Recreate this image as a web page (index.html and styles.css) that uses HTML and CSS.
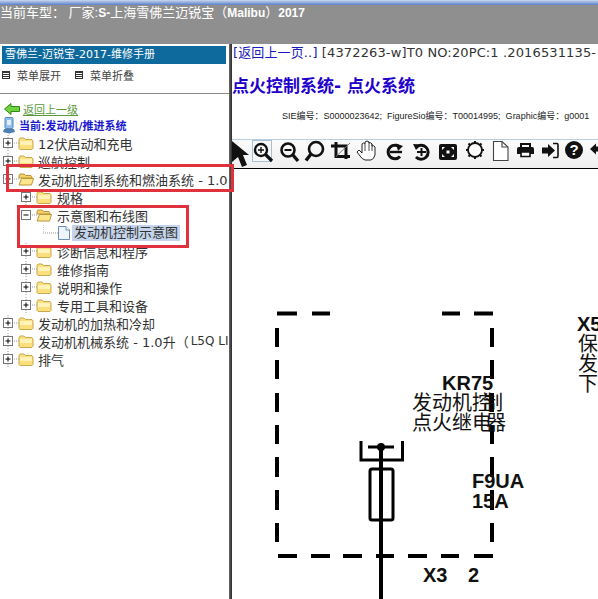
FILE: index.html
```html
<!DOCTYPE html>
<html lang="zh-CN">
<head>
<meta charset="UTF-8">
<title>维修手册</title>
<link rel="stylesheet" href="styles.css">
</head>
<body>

<svg class="defs" width="0" height="0">
    <symbol id="folder" viewBox="0 0 16 14">
        <path d="M1 3.5 L2 2 H6 L7.5 3.5 H14 L15 5 V12.5 L14 13.5 H2 L1 12.5 Z" fill="#fbdf7c" stroke="#c9a94e"/>
        <path d="M2 5 H14 V9 H2 Z" fill="#fff3b8"/>
    </symbol>
    <symbol id="folder-open" viewBox="0 0 16 14">
        <path d="M1 3.5 L2 2 H6 L7.5 3.5 H13 L14 5 V6 H1 Z" fill="#f5d066" stroke="#b8963c"/>
        <path d="M1 13 L3.5 6.5 H15.5 L13.5 13 Z" fill="#fde58c" stroke="#b8963c"/>
    </symbol>
    <symbol id="plus" viewBox="0 0 16 16">
        <path d="M9 8 H16 M5 0 V3 M5 13 V16" stroke="#999" stroke-dasharray="1 1"/>
        <rect x="0.5" y="3.5" width="9" height="9" fill="#fff" stroke="#777"/>
        <path d="M2.5 8 H7.5 M5 5.5 V10.5" stroke="#000"/>
    </symbol>
    <symbol id="minus" viewBox="0 0 16 16">
        <path d="M9 8 H16" stroke="#999" stroke-dasharray="1 1"/>
        <rect x="0.5" y="3.5" width="9" height="9" fill="#fff" stroke="#777"/>
        <path d="M2.5 8 H7.5" stroke="#000"/>
    </symbol>
</svg>

<div class="titlebar"></div>
<header class="topbar">当前车型： 厂家:<b>S-</b>上海雪佛兰迈锐宝（<b>Malibu</b>）<b>2017</b></header>

<div class="main">
    <aside class="side">
        <div class="side-title">雪佛兰-迈锐宝-2017-维修手册</div>
        <div class="side-menu">
            <span class="menu-item"><i class="menu-box"></i>菜单展开</span>
            <span class="menu-item"><i class="menu-box"></i>菜单折叠</span>
        </div>
        <div class="side-nav">
            <div class="back">
                <svg width="16" height="12" viewBox="0 0 16 12"><path d="M0.5 6 L7 0.5 V3.5 H15.5 V8.5 H7 V11.5 Z" fill="#6fd23a" stroke="#2f8a17"/></svg>
                <a class="back-link">返回上一级</a>
            </div>
            <div class="current">
                <svg width="14" height="17" viewBox="0 0 14 17"><rect x="3" y="0.5" width="8" height="11" rx="1" fill="#8fc0ee" stroke="#5a86b4"/><rect x="5" y="3" width="4" height="5" fill="#dff0ff"/><path d="M2 12 H12 L13 15 L7 16.5 L1 15 Z" fill="#4d7fb5"/></svg>
                <span>当前:发动机/推进系统</span>
            </div>
        </div>
        <ul class="tree">
            <li class="row"><svg class="toggle"><use href="#plus"/></svg><svg class="folder"><use href="#folder"/></svg>12伏启动和充电</li>
            <li class="row"><svg class="toggle"><use href="#plus"/></svg><svg class="folder"><use href="#folder"/></svg>巡航控制</li>
            <li class="row"><svg class="toggle"><use href="#plus"/></svg><svg class="folder"><use href="#folder-open"/></svg>发动机控制系统和燃油系统 - 1.0</li>
            <li class="row sub"><svg class="toggle"><use href="#plus"/></svg><svg class="folder"><use href="#folder"/></svg>规格</li>
            <li class="row sub"><svg class="toggle"><use href="#minus"/></svg><svg class="folder"><use href="#folder-open"/></svg>示意图和布线图</li>
            <li class="row leaf">
                <svg class="page" width="28" height="16" viewBox="0 0 28 16"><path d="M0 0 V8 H15" stroke="#999" stroke-dasharray="1 1" fill="none"/><path d="M15.5 1.5 H23 L26.5 5 V14.5 H15.5 Z" fill="#eef4fc" stroke="#6f8db0"/><path d="M23 1.5 V5 H26.5" fill="#fff" stroke="#6f8db0"/></svg>
                <span class="selected">发动机控制示意图</span>
            </li>
            <li class="row sub"><svg class="toggle"><use href="#plus"/></svg><svg class="folder"><use href="#folder"/></svg>诊断信息和程序</li>
            <li class="row sub"><svg class="toggle"><use href="#plus"/></svg><svg class="folder"><use href="#folder"/></svg>维修指南</li>
            <li class="row sub"><svg class="toggle"><use href="#plus"/></svg><svg class="folder"><use href="#folder"/></svg>说明和操作</li>
            <li class="row sub"><svg class="toggle"><use href="#plus"/></svg><svg class="folder"><use href="#folder"/></svg>专用工具和设备</li>
            <li class="row"><svg class="toggle"><use href="#plus"/></svg><svg class="folder"><use href="#folder"/></svg>发动机的加热和冷却</li>
            <li class="row"><svg class="toggle"><use href="#plus"/></svg><svg class="folder"><use href="#folder"/></svg>发动机机械系统 - 1.0升（<span class="latin">L5Q LI</span></li>
            <li class="row"><svg class="toggle"><use href="#plus"/></svg><svg class="folder"><use href="#folder"/></svg>排气</li>
        </ul>
        <div class="mark mark-a"></div>
        <div class="mark mark-b"></div>
    </aside>

    <div class="splitter"></div>

    <section class="doc">
        <div class="doc-path"><a class="doc-back">[返回上一页..]</a> [4372263-w]T0 NO:20PC:1 .2016531135-</div>
        <h1 class="doc-title">点火控制系统- 点火系统</h1>
        <div class="doc-meta">SIE编号：S0000023642;&nbsp; FigureSio编号：T00014995;&nbsp; Graphic编号：g0001</div>

        <svg class="tools" width="366" height="28" viewBox="0 0 366 28">
            <!-- arrow -->
            <path d="M0 1 L17 15 H11 L15 25 L10 27 L6 17 L0 22 Z" fill="#111"/>
            <!-- zoom in -->
            <rect x="20.500" y="0.500" width="19" height="21" fill="#f8f8f8" stroke="#a9c0d4"/>
            <circle cx="29" cy="10" r="6" fill="none" stroke="#111" stroke-width="2.4"/>
            <path d="M33.500 14.500 L40 21" stroke="#111" stroke-width="3.2"/>
            <path d="M26 10 H32 M29 7 V13" stroke="#111" stroke-width="1.4"/>
            <!-- zoom out -->
            <circle cx="56" cy="10" r="6.500" fill="none" stroke="#111" stroke-width="2.6"/>
            <path d="M60.500 14.500 L66 21" stroke="#111" stroke-width="3.4"/>
            <path d="M52.500 10 H59.500" stroke="#111" stroke-width="2"/>
            <!-- find -->
            <circle cx="84" cy="9" r="7" fill="none" stroke="#111" stroke-width="2.6"/>
            <path d="M79 14 L74 20.500" stroke="#111" stroke-width="3.4"/>
            <!-- crop -->
            <path d="M99 6 H114 V19 M104 2 V16.500 H118" fill="none" stroke="#111" stroke-width="3"/>
            <path d="M104 16.500 L118 3" stroke="#777" stroke-width="1"/>
            <!-- hand -->
            <path d="M125 12 L127 10 L130 13 V4 Q131.500 2 133 4 V2 Q135 0 137 2 V3 Q139 2 140 4 V6 Q142 5 143 7 V15 Q142 19 139 20 H133 Q130 19 128 16 Z" fill="#fff" stroke="#222" stroke-width="1"/>
            <path d="M133 4 V11 M137 2 V11 M140 4 V11" stroke="#222" stroke-width="0.8"/>
            <!-- redo -->
            <path d="M168 7.500 A6.800 6.800 0 1 0 168 16.500" fill="none" stroke="#111" stroke-width="3"/>
            <path d="M158 12 H170" stroke="#111" stroke-width="2.400"/>
            <path d="M164 3.500 L171 6 L166 11 Z" fill="#111"/>
            <!-- rotate -->
            <path d="M184 7.500 A7 7 0 1 1 184 17" fill="none" stroke="#111" stroke-width="3"/>
            <path d="M181 4 L189 4.500 L184 10 Z" fill="#111"/>
            <path d="M185 12 H194 M189.500 8 V16" stroke="#111" stroke-width="2"/>
            <!-- fit -->
            <rect x="207" y="4" width="18" height="16" rx="2" fill="#111"/>
            <path d="M210 7 L213 7 L210 10 Z M222 7 L219 7 L222 10 Z M210 17 L213 17 L210 14 Z M222 17 L219 17 L222 14 Z M214.500 10.500 H217.500 V13.500 H214.500 Z" fill="#fff"/>
            <!-- gear -->
            <circle cx="243" cy="10" r="7" fill="#fff" stroke="#111" stroke-width="1.800"/>
            <path d="M243 1 V4 M243 16 V19 M234 10 H237 M249 10 H252 M236.500 3.500 L238.500 5.500 M247.500 14.500 L249.500 16.500 M249.500 3.500 L247.500 5.500 M238.500 14.500 L236.500 16.500" stroke="#111" stroke-width="2"/>
            <!-- page -->
            <path d="M261.500 1.500 H270 L276 7 V20.500 H261.500 Z" fill="#fff" stroke="#444" stroke-width="1.100"/>
            <path d="M270 1.500 V7 H276" fill="none" stroke="#444" stroke-width="1.100"/>
            <!-- print -->
            <path d="M289 7 V4 H298 V7" fill="none" stroke="#111" stroke-width="2"/>
            <path d="M287 7 H300 Q302 7 302 9 V14 H285 V9 Q285 7 287 7 Z" fill="#111"/>
            <path d="M289 12 H298 V16.500 H289 Z" fill="#fff" stroke="#111" stroke-width="1.600"/>
            <!-- login -->
            <path d="M310 7.500 H316 V4 L323 10.500 L316 17 V13.500 H310 Z" fill="#111"/>
            <path d="M321 3.500 H325 Q326 3.500 326 5 V16 Q326 17.500 325 17.500 H321" fill="none" stroke="#111" stroke-width="1.600"/>
            <!-- help -->
            <circle cx="342" cy="10" r="9" fill="#111"/>
            <text class="tool-q" x="342" y="15">?</text>
            <!-- back -->
            <path d="M358 9 L364 3.500 V6.500 H366 V11.500 H364 V14.500 Z" fill="#111"/>
        </svg>

        <svg class="diagram" width="366" height="430" viewBox="232 169 366 430">
            <path class="dash" d="M277 313.500 H297 M312 313.500 H330 M442 313.500 H460 M474 313.500 H493"/>
            <path class="dash" d="M277 328 V347 M277 360 V379 M277 393 V412 M277 425 V444 M277 457 V477 M277 490 V510 M277 523 V542"/>
            <path class="dash" d="M492 328 V347 M492 360 V379 M492 393 V412 M492 425 V444 M492 457 V477 M492 490 V510 M492 523 V542"/>
            <path class="dash" d="M278 556 H297 M311 556 H330 M343 556 H362 M376 556 H394 M408 556 H427 M441 556 H459 M474 556 H493"/>
            <path class="dash" d="M381 445 V599"/>
            <path class="wire" d="M361 441 V460 H402.500 V441 M368 447 H394"/>
            <circle cx="381" cy="447" r="4" fill="#000"/>
            <rect x="370" y="469" width="23" height="51" rx="2" fill="#fff" stroke="#000" stroke-width="3"/>
            <path class="dash" d="M381 469 V520"/>

            <text class="label" x="442" y="390">KR75</text>
            <text class="label-cn" x="412 432 452 472 483" y="410">发动机控制</text>
            <text class="label-cn" x="412 432 452 472 486" y="430">点火继电器</text>
            <text class="label" x="472" y="488">F9UA</text>
            <text class="label" x="472" y="508">15A</text>
            <text class="label" x="423" y="582">X3</text>
            <text class="label" x="468" y="582">2</text>
            <text class="label" x="577" y="331">X5</text>
            <text class="label-cn" x="578" y="351">保</text>
            <text class="label-cn" x="578" y="371">发</text>
            <text class="label-cn" x="578" y="391">下</text>
        </svg>
    </section>
</div>

</body>
</html>
```

FILE: styles.css
```css
html, body {
    margin: 0;
    height: 100%;
}
body {
    width: 598px;
    height: 599px;
    overflow: hidden;
    position: relative;
    background: #fff;
    color: #333;
    font-family: "DejaVu Sans", "Noto Sans CJK SC", sans-serif;
    font-size: 13px;
}
.defs {
    position: absolute;
}

/* Top bars */
.titlebar {
    height: 5px;
    background: linear-gradient(#c9d8ef, #5b7fc9);
}
.topbar {
    height: 39px;
    background: #8f8f8f;
    color: #fff;
    font-family: "Liberation Sans", "Noto Sans CJK SC", sans-serif;
    font-size: 13px;
    line-height: 16px;
    white-space: nowrap;
}
.topbar b {
    font-size: 12px;
    font-weight: 700;
}

.main {
    display: flex;
    height: 555px;
}

/* Left pane */
.side {
    position: relative;
    width: 229px;
    flex: none;
}
.side-title {
    margin: 2px 3px 0 2px;
    height: 18px;
    line-height: 18px;
    padding-left: 3px;
    background: #0e6a9c;
    color: #fff;
    font-size: 11px;
    white-space: nowrap;
}
.side-menu {
    display: flex;
    gap: 14px;
    height: 26px;
    align-items: flex-start;
    padding: 3px 0 0 2px;
    border-bottom: 1px solid #8a8a8a;
    font-size: 11px;
    color: #444;
}
.menu-item {
    display: flex;
    align-items: center;
    gap: 7px;
}
.menu-box {
    display: block;
    width: 6px;
    height: 6px;
    border: 1px solid #333;
    background: repeating-linear-gradient(#333 0 1px, #fff 1px 2px);
}
.side-nav {
    padding: 7px 0 0 4px;
}
.back {
    display: flex;
    align-items: center;
    gap: 3px;
    height: 16px;
}
.back-link {
    font-size: 11px;
    color: #5a9a3c;
    text-decoration: underline;
}
.current {
    display: flex;
    align-items: center;
    gap: 3px;
    height: 16px;
    margin-left: -2px;
    color: #1a1ad0;
    font-size: 11px;
    font-weight: 700;
}

.tree {
    list-style: none;
    margin: 1px 0 0;
    padding: 0;
    overflow: hidden;
}
.row {
    display: flex;
    align-items: center;
    height: 18px;
    padding-left: 3px;
    white-space: nowrap;
    color: #333;
}
.row.sub {
    padding-left: 21px;
}
.row.leaf {
    padding-left: 43px;
}
.toggle {
    width: 16px;
    height: 16px;
    flex: none;
}
.folder {
    width: 16px;
    height: 14px;
    flex: none;
    margin: 0 4px 0 -1px;
}
.sub .folder {
    margin-right: 5px;
}
.page {
    flex: none;
    margin-right: 1px;
}
.selected {
    padding: 0 2px;
    line-height: 16px;
    background: #c4d4ea;
}
.latin {
    margin-left: 2px;
    font-family: "DejaVu Sans", sans-serif;
    font-size: 12px;
}

/* red call-outs drawn over the tree */
.mark {
    position: absolute;
    z-index: 1;
    box-sizing: border-box;
    border: 3px solid #e0323c;
}
.mark-a {
    left: 6px;
    top: 120px;
    width: 228px;
    height: 28px;
}
.mark-b {
    left: 17px;
    top: 161px;
    width: 172px;
    height: 43px;
}

.splitter {
    width: 3px;
    flex: none;
    background: linear-gradient(90deg, #6a6a6a, #2a2a2a);
}

/* Right pane */
.doc {
    flex: 1;
    min-width: 0;
    overflow: hidden;
    position: relative;
    white-space: nowrap;
}
.doc-path {
    height: 18px;
    padding-top: 1px;
    line-height: 16px;
    margin-left: 1px;
    color: #333;
    font-size: 13px;
    letter-spacing: 0.13px;
}
.doc-back {
    color: #1a1ab8;
}
.doc-title {
    margin: 10px 0 0;
    height: 26px;
    line-height: 26px;
    color: #2200cc;
    font-size: 17px;
    font-weight: 700;
}
.doc-meta {
    height: 20px;
    margin-top: 7px;
    padding-left: 50px;
    line-height: 20px;
    color: #222;
    font-family: "Liberation Sans", "Noto Sans CJK SC", sans-serif;
    font-size: 9px;
}
.tools {
    display: block;
    margin-top: 13px;
    background: linear-gradient(#fbfbfb, #efefef);
    border-top: 1px solid #b9cfe0;
    border-bottom: 1px solid #000;
}
.tool-q {
    fill: #fff;
    font-family: "Liberation Sans", sans-serif;
    font-size: 15px;
    font-weight: 700;
    text-anchor: middle;
}

.diagram {
    display: block;
}
.dash {
    fill: none;
    stroke: #000;
    stroke-width: 4;
}
.wire {
    fill: none;
    stroke: #000;
    stroke-width: 3;
}
.label {
    fill: #111;
    font-family: "Liberation Sans", sans-serif;
    font-size: 20px;
    font-weight: 700;
}
.label-cn {
    fill: #111;
    font-family: "Noto Sans CJK SC", sans-serif;
    font-size: 20px;
}
```
